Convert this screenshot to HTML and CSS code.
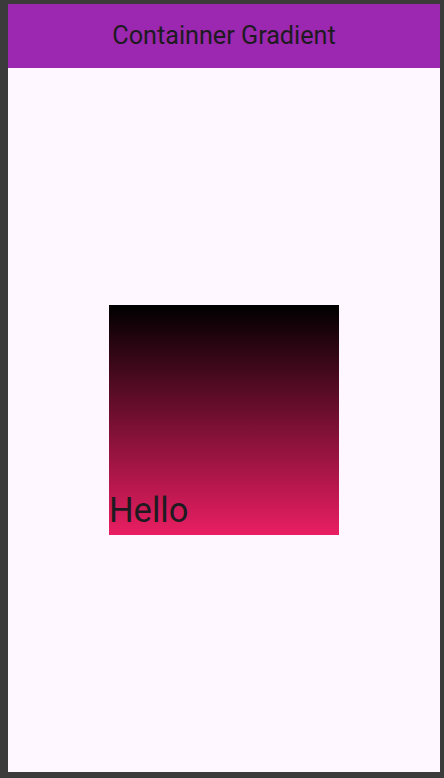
FILE: index.html
```html
<!DOCTYPE html>
<html>
<head>
<meta charset="utf-8">
<link rel="stylesheet" href="styles.css">
</head>
<body>
<div class="frame">
  <div class="screen">
    <header class="appbar">
      <h1 class="title">Containner Gradient</h1>
    </header>
    <main class="content">
      <div class="box">
        <span class="hello">Hello</span>
      </div>
    </main>
  </div>
</div>
</body>
</html>
```
FILE: styles.css
```css
html, body {
  margin: 0;
  padding: 0;
  width: 444px;
  height: 778px;
  overflow: hidden;
  background: #3b3b3b;
}
.frame {
  box-sizing: border-box;
  width: 444px;
  height: 778px;
  padding: 4px 4px 6px 8px;
  display: flex;
}
.screen {
  flex: 1;
  display: flex;
  flex-direction: column;
  background: #fef7ff;
}
.appbar {
  height: 64px;
  flex: none;
  background: #9c27b0;
  display: flex;
  align-items: center;
  justify-content: center;
}
.title {
  margin: 0;
  font-family: Roboto, "Noto Sans", sans-serif;
  font-weight: 400;
  font-size: 25.2px;
  color: #1d1b20;
  line-height: 1;
  padding-bottom: 1px;
}
.content {
  flex: 1;
  display: flex;
  align-items: center;
  justify-content: center;
}
.box {
  width: 230px;
  height: 230px;
  background: linear-gradient(to bottom, #000000, #e91e63);
  display: flex;
  align-items: flex-end;
}
.hello {
  display: block;
  font-family: Roboto, "Noto Sans", sans-serif;
  font-size: 34.5px;
  line-height: 1;
  color: #1d1b20;
  padding-bottom: 7.5px;
}
```
